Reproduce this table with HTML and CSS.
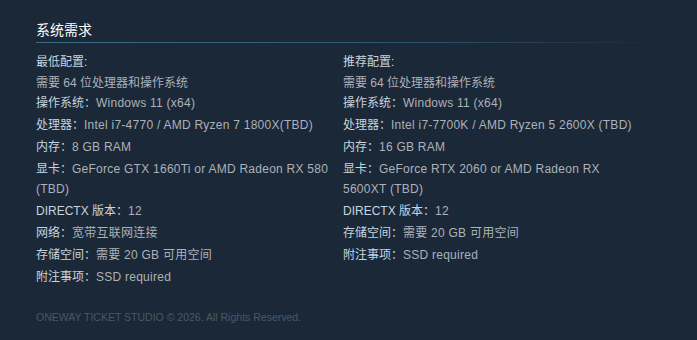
FILE: index.html
```html
<!DOCTYPE html>
<html lang="zh-CN">
<head>
<meta charset="utf-8">
<title>系统需求</title>
<link rel="stylesheet" href="styles.css">
</head>
<body>
<section class="sysreq">
  <h2 class="sysreq-title">系统需求</h2>
  <div class="sysreq-cols">
    <div class="col">
      <div class="col-head">最低配置:</div>
      <ul class="req-list">
        <li class="first">需要 64 位处理器和操作系统</li>
        <li class="second"><span class="k">操作系统：</span>Windows 11 (x64)</li>
        <li><span class="k">处理器：</span>Intel i7-4770 / AMD Ryzen 7 1800X(TBD)</li>
        <li><span class="k">内存：</span>8 GB RAM</li>
        <li><span class="k">显卡：</span>GeForce GTX 1660Ti or AMD Radeon RX 580 (TBD)</li>
        <li><span class="k">DIRECTX 版本：</span>12</li>
        <li><span class="k">网络：</span>宽带互联网连接</li>
        <li><span class="k">存储空间：</span>需要 20 GB 可用空间</li>
        <li><span class="k">附注事项：</span>SSD required</li>
      </ul>
    </div>
    <div class="col">
      <div class="col-head">推荐配置:</div>
      <ul class="req-list">
        <li class="first">需要 64 位处理器和操作系统</li>
        <li class="second"><span class="k">操作系统：</span>Windows 11 (x64)</li>
        <li><span class="k">处理器：</span>Intel i7-7700K / AMD Ryzen 5 2600X (TBD)</li>
        <li><span class="k">内存：</span>16 GB RAM</li>
        <li><span class="k">显卡：</span>GeForce RTX 2060 or AMD Radeon RX 5600XT (TBD)</li>
        <li><span class="k">DIRECTX 版本：</span>12</li>
        <li><span class="k">存储空间：</span>需要 20 GB 可用空间</li>
        <li><span class="k">附注事项：</span>SSD required</li>
      </ul>
    </div>
  </div>
  <footer class="copyright">ONEWAY TICKET STUDIO © 2026. All Rights Reserved.</footer>
</section>
</body>
</html>
```
FILE: styles.css
```css
html, body {
  margin: 0;
  padding: 0;
  background: #1b2838;
}
body {
  font-family: "Liberation Sans", Arial, "Noto Sans CJK SC", sans-serif;
  color: #acb2b8;
  font-size: 12px;
}
.sysreq {
  padding: 22px 36px 0 36px;
  width: 625px;
}
.sysreq-title {
  margin: 0;
  font-size: 14px;
  font-weight: normal;
  color: #ffffff;
  line-height: 17px;
  padding-bottom: 3px;
  border-bottom: 1px solid transparent;
  border-image: linear-gradient(to right, #3d6c8a 0%, #2f5470 60%, rgba(47,84,112,0) 100%) 1;
}
.sysreq-cols {
  display: grid;
  grid-template-columns: 296px 296px;
  column-gap: 11px;
  padding-top: 9px;
}
.col-head {
  color: #c6d4df;
  line-height: 20px;
}
.req-list {
  list-style: none;
  margin: 0;
  padding: 0;
}
.req-list li {
  line-height: 20px;
  margin-top: 2px;
  letter-spacing: 0.25px;
}
.req-list li.first {
  margin-top: 1px;
  letter-spacing: 0;
}
.req-list li.second {
  margin-top: 0;
}
.k {
  color: #c6d4df;
  letter-spacing: 0;
}
.copyright {
  margin-top: 23px;
  font-size: 10.5px;
  color: #4a5866;
  line-height: 14px;
}
```
